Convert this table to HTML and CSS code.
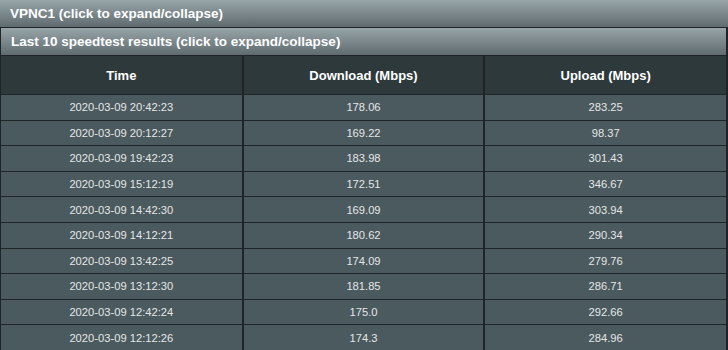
FILE: index.html
```html
<!DOCTYPE html>
<html>
<head>
<meta charset="utf-8">
<link rel="stylesheet" href="styles.css">
</head>
<body>
<div class="bar bar-top">VPNC1 (click to expand/collapse)</div>
<div class="panel">
  <div class="bar bar-sub">Last 10 speedtest results (click to expand/collapse)</div>
  <table class="results">
    <thead>
      <tr><th>Time</th><th>Download (Mbps)</th><th>Upload (Mbps)</th></tr>
    </thead>
    <tbody>
      <tr><td>2020-03-09 20:42:23</td><td>178.06</td><td>283.25</td></tr>
      <tr><td>2020-03-09 20:12:27</td><td>169.22</td><td>98.37</td></tr>
      <tr><td>2020-03-09 19:42:23</td><td>183.98</td><td>301.43</td></tr>
      <tr><td>2020-03-09 15:12:19</td><td>172.51</td><td>346.67</td></tr>
      <tr><td>2020-03-09 14:42:30</td><td>169.09</td><td>303.94</td></tr>
      <tr><td>2020-03-09 14:12:21</td><td>180.62</td><td>290.34</td></tr>
      <tr><td>2020-03-09 13:42:25</td><td>174.09</td><td>279.76</td></tr>
      <tr><td>2020-03-09 13:12:30</td><td>181.85</td><td>286.71</td></tr>
      <tr><td>2020-03-09 12:42:24</td><td>175.0</td><td>292.66</td></tr>
      <tr><td>2020-03-09 12:12:26</td><td>174.3</td><td>284.96</td></tr>
    </tbody>
  </table>
</div>
</body>
</html>
```
FILE: styles.css
```css
html, body {
  margin: 0;
  padding: 0;
  background: #1e2427;
  font-family: "Liberation Sans", Arial, sans-serif;
}
.bar {
  color: #ffffff;
  font-weight: bold;
  font-size: 13.5px;
  background: linear-gradient(#97a4a8, #5f6b6f);
  box-sizing: border-box;
  display: flex;
  align-items: center;
}
.bar-top {
  height: 28px;
  padding-left: 10px;
  padding-bottom: 1px;
  border-bottom: 1px solid #1e2427;
}
.panel {
  width: 727px;
  box-sizing: border-box;
  border-left: 1px solid #1e2427;
  border-right: 1px solid #1e2427;
}
.bar-sub {
  height: 28px;
  padding-left: 10px;
  border-bottom: 1px solid #1e2427;
}
.results {
  width: 100%;
  border-collapse: collapse;
  table-layout: fixed;
}
.results th {
  background: #2e393c;
  color: #ffffff;
  font-size: 13px;
  font-weight: bold;
  height: 38px;
  padding: 0;
  border-left: 2px solid #1e2427;
  border-bottom: 1px solid #1e2427;
}
.results td {
  background: #4a5a5f;
  color: #e6e6e6;
  font-size: 11.2px;
  text-align: center;
  height: 24.6px;
  padding: 0;
  border-left: 2px solid #1e2427;
  border-bottom: 1px solid #1e2427;
}
.results th:first-child, .results td:first-child {
  border-left: none;
}
```
